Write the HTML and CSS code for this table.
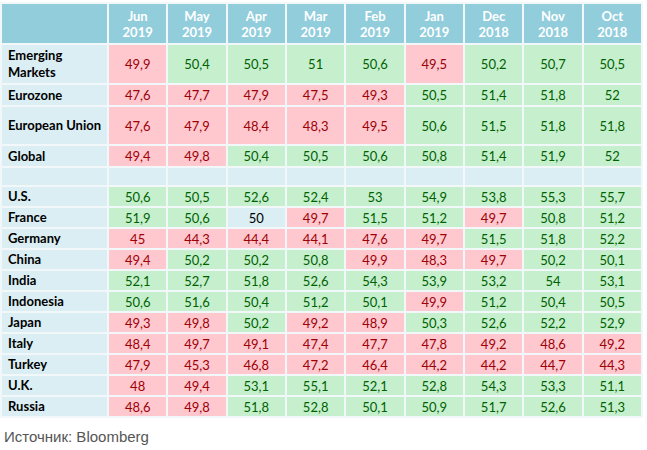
FILE: index.html
```html
<!DOCTYPE html>
<html lang="ru">
<head>
<meta charset="utf-8">
<title>PMI</title>
<link rel="stylesheet" href="styles.css">
</head>
<body>
<div class="sheet">
  <div class="grid">
    <div class="hd corner"></div>
    <div class="hd">Jun<br>2019</div>
    <div class="hd">May<br>2019</div>
    <div class="hd">Apr<br>2019</div>
    <div class="hd">Mar<br>2019</div>
    <div class="hd">Feb<br>2019</div>
    <div class="hd">Jan<br>2019</div>
    <div class="hd">Dec<br>2018</div>
    <div class="hd">Nov<br>2018</div>
    <div class="hd">Oct<br>2018</div>

    <div class="lb">Emerging<br>Markets</div>
    <div class="r">49,9</div><div class="g">50,4</div><div class="g">50,5</div><div class="g">51</div><div class="g">50,6</div><div class="r">49,5</div><div class="g">50,2</div><div class="g">50,7</div><div class="g">50,5</div>

    <div class="lb">Eurozone</div>
    <div class="r">47,6</div><div class="r">47,7</div><div class="r">47,9</div><div class="r">47,5</div><div class="r">49,3</div><div class="g">50,5</div><div class="g">51,4</div><div class="g">51,8</div><div class="g">52</div>

    <div class="lb">European Union</div>
    <div class="r">47,6</div><div class="r">47,9</div><div class="r">48,4</div><div class="r">48,3</div><div class="r">49,5</div><div class="g">50,6</div><div class="g">51,5</div><div class="g">51,8</div><div class="g">51,8</div>

    <div class="lb">Global</div>
    <div class="r">49,4</div><div class="r">49,8</div><div class="g">50,4</div><div class="g">50,5</div><div class="g">50,6</div><div class="g">50,8</div><div class="g">51,4</div><div class="g">51,9</div><div class="g">52</div>

    <div class="lb"></div>
    <div class="n"></div><div class="n"></div><div class="n"></div><div class="n"></div><div class="n"></div><div class="n"></div><div class="n"></div><div class="n"></div><div class="n"></div>

    <div class="lb">U.S.</div>
    <div class="g">50,6</div><div class="g">50,5</div><div class="g">52,6</div><div class="g">52,4</div><div class="g">53</div><div class="g">54,9</div><div class="g">53,8</div><div class="g">55,3</div><div class="g">55,7</div>

    <div class="lb">France</div>
    <div class="g">51,9</div><div class="g">50,6</div><div class="n">50</div><div class="r">49,7</div><div class="g">51,5</div><div class="g">51,2</div><div class="r">49,7</div><div class="g">50,8</div><div class="g">51,2</div>

    <div class="lb">Germany</div>
    <div class="r">45</div><div class="r">44,3</div><div class="r">44,4</div><div class="r">44,1</div><div class="r">47,6</div><div class="r">49,7</div><div class="g">51,5</div><div class="g">51,8</div><div class="g">52,2</div>

    <div class="lb">China</div>
    <div class="r">49,4</div><div class="g">50,2</div><div class="g">50,2</div><div class="g">50,8</div><div class="r">49,9</div><div class="r">48,3</div><div class="r">49,7</div><div class="g">50,2</div><div class="g">50,1</div>

    <div class="lb">India</div>
    <div class="g">52,1</div><div class="g">52,7</div><div class="g">51,8</div><div class="g">52,6</div><div class="g">54,3</div><div class="g">53,9</div><div class="g">53,2</div><div class="g">54</div><div class="g">53,1</div>

    <div class="lb">Indonesia</div>
    <div class="g">50,6</div><div class="g">51,6</div><div class="g">50,4</div><div class="g">51,2</div><div class="g">50,1</div><div class="r">49,9</div><div class="g">51,2</div><div class="g">50,4</div><div class="g">50,5</div>

    <div class="lb">Japan</div>
    <div class="r">49,3</div><div class="r">49,8</div><div class="g">50,2</div><div class="r">49,2</div><div class="r">48,9</div><div class="g">50,3</div><div class="g">52,6</div><div class="g">52,2</div><div class="g">52,9</div>

    <div class="lb">Italy</div>
    <div class="r">48,4</div><div class="r">49,7</div><div class="r">49,1</div><div class="r">47,4</div><div class="r">47,7</div><div class="r">47,8</div><div class="r">49,2</div><div class="r">48,6</div><div class="r">49,2</div>

    <div class="lb">Turkey</div>
    <div class="r">47,9</div><div class="r">45,3</div><div class="r">46,8</div><div class="r">47,2</div><div class="r">46,4</div><div class="r">44,2</div><div class="r">44,2</div><div class="r">44,7</div><div class="r">44,3</div>

    <div class="lb">U.K.</div>
    <div class="r">48</div><div class="r">49,4</div><div class="g">53,1</div><div class="g">55,1</div><div class="g">52,1</div><div class="g">52,8</div><div class="g">54,3</div><div class="g">53,3</div><div class="g">51,1</div>

    <div class="lb">Russia</div>
    <div class="r">48,6</div><div class="r">49,8</div><div class="g">51,8</div><div class="g">52,8</div><div class="g">50,1</div><div class="g">50,9</div><div class="g">51,7</div><div class="g">52,6</div><div class="g">51,3</div>
  </div>
  <p class="source">Источник: Bloomberg</p>
</div>
</body>
</html>
```

FILE: styles.css
```css
html, body {
  margin: 0;
  padding: 0;
  background: #ffffff;
}

.sheet {
  padding: 2px 4px 0 0;
  width: 647px;
  box-sizing: border-box;
}

.grid {
  display: grid;
  grid-template-columns: 105px repeat(9, 1fr);
  grid-template-rows: 39px 38px 20px 37px 20px 17px repeat(11, 19px);
  gap: 2px;
  padding: 2px;
  background: #f2f8fa;
  font-family: Lato, "Open Sans", sans-serif;
  font-size: 13px;
}

.grid > div {
  display: flex;
  align-items: center;
  justify-content: center;
  text-align: center;
}

.hd {
  background: #92cddc;
  color: #ffffff;
  font-weight: bold;
  line-height: 16px;
}

.lb {
  background: #daeef3;
  color: #000000;
  font-weight: bold;
  line-height: 17px;
  justify-content: flex-start !important;
  text-align: left !important;
  padding-left: 6px;
}

.r {
  background: #ffc7ce;
  color: #9c0006;
}

.g {
  background: #c6efce;
  color: #006100;
}

.n {
  background: #daeef3;
  color: #000000;
}

.source {
  margin: 10px 0 0 4px;
  font-family: "Liberation Sans", Arial, sans-serif;
  font-size: 15px;
  color: #555555;
}
```
